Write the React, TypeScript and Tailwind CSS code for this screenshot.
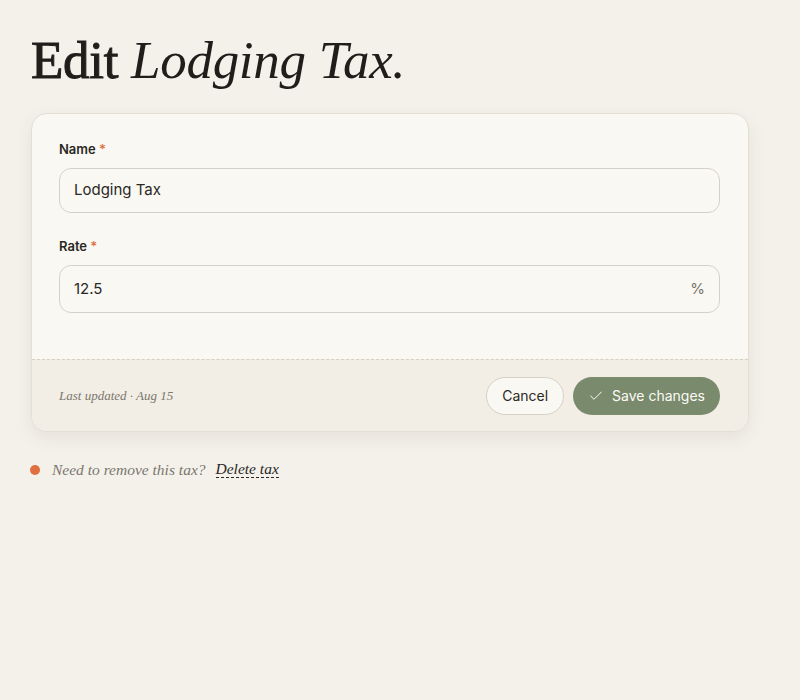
import { Check } from "lucide-react";

const serif = "font-['Liberation_Serif',serif]";
const sans = "font-['Inter',sans-serif]";

function Field({
  label,
  value,
  suffix,
  tall,
}: {
  label: string;
  value: string;
  suffix?: string;
  tall?: boolean;
}) {
  return (
    <div className="flex flex-col">
      <label className="text-[13px] font-semibold text-[#2a2824] leading-4">
        {label} <span className="text-[#e0703f]">*</span>
      </label>
      <div
        className={`mt-[11px] flex items-center justify-between rounded-xl border border-[#d6d1c8] bg-[#faf8f3] px-[14px] ${
          tall ? "h-[48px]" : "h-[45px]"
        }`}
      >
        <span className="text-[15px] text-[#2a2824]">{value}</span>
        {suffix && <span className="text-[15px] text-[#77736b]">{suffix}</span>}
      </div>
    </div>
  );
}

export default function App() {
  return (
    <div className={`min-h-[700px] w-full bg-[#f4f1eb] ${sans}`}>
      <div className="px-[31px] pt-[30px]">
        <h1 className={`${serif} text-[53px] leading-[60px] text-[#1f1e1b] tracking-[-0.3px]`}>
          <span className="[-webkit-text-stroke:1px_#1f1e1b]">Edit</span> <em>Lodging Tax.</em>
        </h1>

        <div className="mt-[23px] w-[718px] overflow-hidden rounded-2xl border border-[#e4dfd6] bg-[#faf8f3] shadow-[0_6px_18px_rgba(60,50,30,0.08)]">
          <div className="flex flex-col gap-[25px] pl-[27px] pr-[28px] pt-[27px] pb-[46px]">
            <Field label="Name" value="Lodging Tax" />
            <Field label="Rate" value="12.5" suffix="%" tall />
          </div>
          <div className="flex h-[72px] items-center justify-between border-t border-dashed border-[#d6cfc3] bg-[#f3eee5] pl-[27px] pr-[28px]">
            <span className={`${serif} italic text-[13px] text-[#7a766e]`}>
              Last updated · Aug 15
            </span>
            <div className="flex items-center gap-[9px]">
              <button className="h-[38px] rounded-full border border-[#d6d1c8] bg-[#faf8f3] px-[15px] text-[14px] text-[#2a2824]">
                Cancel
              </button>
              <button className="flex h-[38px] items-center gap-[8px] rounded-full bg-[#7a8a6c] px-[15px] text-[14px] text-[#fbfaf6]">
                <Check size={16} strokeWidth={1.5} />
                Save changes
              </button>
            </div>
          </div>
        </div>

        <div className="mt-[26px] flex items-center">
          <span className="ml-[-1px] h-[10px] w-[10px] rounded-full bg-[#e0703f]" />
          <span className={`${serif} ml-[12px] italic text-[15.5px] text-[#7a766e]`}>
            Need to remove this tax?
          </span>
          <span
            className={`${serif} ml-[10px] italic text-[15.5px] text-[#2a2824] border-b border-dashed border-[#2a2824] leading-[16px]`}
          >
            Delete tax
          </span>
        </div>
      </div>
    </div>
  );
}
